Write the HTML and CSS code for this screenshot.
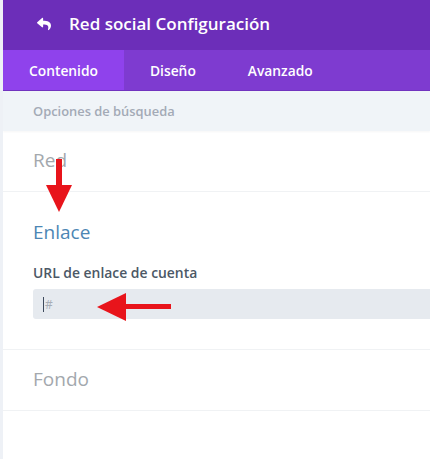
FILE: index.html
```html
<!DOCTYPE html>
<html lang="es">

<head>
    <meta charset="UTF-8">
    <meta name="viewport" content="width=device-width, initial-scale=1.0">
    <title>Red social Configuración</title>
    <link rel="stylesheet" href="styles.css">
</head>

<body>
    <div class="edge"></div>
    <div class="panel">
        <div class="header">
            <svg class="back-icon" viewBox="0 0 512 512" width="16" height="14">
                <path fill="#fff" d="M8.3 189.8L184.3 37.9C199.7 24.5 224 35.3 224 56v80.1c160.6 1.8 288 34 288 186.3 0 61.4-39.6 122.3-83.3 154.1-13.7 9.900-33.1-2.5-28.1-18.6 45.3-145-21.5-183.5-176.6-185.7V360c0 20.7-24.300 31.5-39.7 18.2l-176-152c-11.1-9.6-11.1-26.8 0-36.4z" />
            </svg>
            <span class="title">Red social Configuración</span>
        </div>
        <div class="tabs">
            <div class="tab active">Contenido</div>
            <div class="tab">Diseño</div>
            <div class="tab">Avanzado</div>
        </div>
        <div class="search">Opciones de búsqueda</div>

        <div class="section">
            <div class="section-title">Red</div>
        </div>
        <div class="section open">
            <div class="section-title">Enlace</div>
            <label class="field-label">URL de enlace de cuenta</label>
            <div class="field-input"><span class="caret"></span>#</div>
        </div>
        <div class="section">
            <div class="section-title">Fondo</div>
        </div>

        <!-- annotation arrows -->
        <svg class="arrow arrow-down" width="30" height="56" viewBox="0 0 30 56">
            <rect x="12" y="0" width="6" height="28" fill="#e8141b" />
            <polygon points="2,26 28,26 15,53" fill="#e8141b" />
        </svg>
        <svg class="arrow arrow-left" width="76" height="30" viewBox="0 0 76 30">
            <rect x="26" y="12" width="48" height="5" fill="#e8141b" />
            <polygon points="0,15 29,1 29,29" fill="#e8141b" />
        </svg>
    </div>
</body>

</html>
```

FILE: styles.css
```css
/* CSS styles */
body {
    margin: 0;
    padding: 0;
    display: flex;
    min-height: 459px;
    font-family: 'Open Sans', Arial, sans-serif;
    background-color: #fff;
    color: #4c5866;
}

.edge {
    width: 3px;
    background-color: #eef1f6;
}

.panel {
    flex: 1;
    position: relative;
    overflow: hidden;
}

.header {
    height: 50px;
    background-color: #6c2eb9;
    display: flex;
    align-items: center;
    padding-left: 33px;
    padding-bottom: 3px;
    box-sizing: border-box;
}

.back-icon {
    margin-right: 17px;
}

.title {
    color: #fff;
    font-size: 17px;
    font-weight: 600;
}

.tabs {
    height: 41px;
    display: flex;
    background-color: #7e3bd0;
    border-bottom: 1px solid #7133bf;
    box-sizing: border-box;
}

.tab {
    color: #fff;
    font-size: 13.8px;
    font-weight: 600;
    display: flex;
    align-items: center;
    padding: 0 26px;
}

.tab.active {
    background-color: #8f42ec;
    width: 121px;
    box-sizing: border-box;
}

.search {
    height: 40px;
    display: flex;
    align-items: center;
    padding-left: 30px;
    background-color: #f0f4f8;
    color: #a3aab6;
    font-size: 12.9px;
    font-weight: 600;
    box-shadow: 0 1px 2px rgba(0, 0, 0, 0.04);
}

.section {
    border-bottom: 1px solid #f0f2f4;
    padding: 17px 0 18px 30px;
}

.section-title {
    font-size: 19px;
    color: #a3a8ad;
    line-height: 25px;
}

.section.open {
    padding-top: 28px;
    padding-bottom: 30px;
}

.section.open .section-title {
    color: #4c86b4;
    margin-bottom: 18px;
}

.field-label {
    display: block;
    font-size: 13.9px;
    font-weight: 600;
    color: #4c5866;
    margin-bottom: 7px;
}

.field-input {
    height: 30px;
    background-color: #e6eaef;
    border-radius: 3px 0 0 3px;
    display: flex;
    align-items: center;
    padding-left: 10px;
    font-size: 12px;
    color: #a8aeb6;
}

.caret {
    width: 1px;
    height: 15px;
    background-color: #3e4a5c;
    margin-right: 1px;
}

.arrow {
    position: absolute;
}

.arrow-down {
    left: 41px;
    top: 159px;
}

.arrow-left {
    left: 94px;
    top: 292px;
}
```
